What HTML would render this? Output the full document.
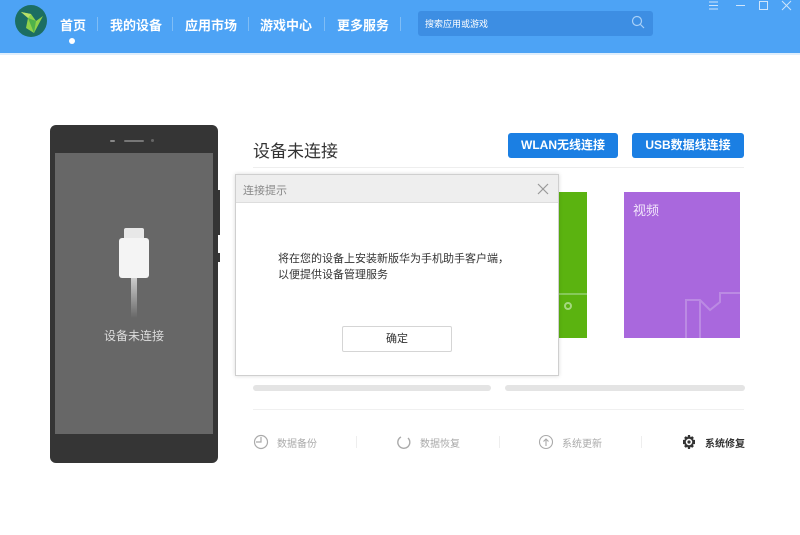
<!DOCTYPE html>
<html><head><meta charset="utf-8"><style>
*{margin:0;padding:0;box-sizing:border-box}
body{width:800px;height:535px;background:#fff;font-family:"Liberation Sans","Noto Sans CJK SC",sans-serif;position:relative;overflow:hidden}
.a{position:absolute}
.hdr{left:0;top:0;width:800px;height:55px;background:#4da3f5;border-bottom:2px solid #dfeefc}
.nav{color:#fff;font-size:13px;font-weight:bold;top:15px}
.sep{width:1px;height:14px;background:#7fbdf6;top:17px}
.btn{background:#1b7fe3;color:#fff;font-size:12px;font-weight:bold;text-align:center;line-height:25px;border-radius:3px;top:133px;height:25px}
.bot{top:435px;font-size:10px;color:#aaa}
.bar{top:385px;height:6px;background:#e4e4e4;border-radius:3px}
</style></head><body>
<div class="a hdr"></div>
<svg class="a" style="left:14px;top:4px" width="36" height="34" viewBox="0 0 36 34">
<circle cx="17" cy="17" r="16" fill="#1c6e62"/>
<polygon points="7,8 14,14 12,24 20,29 29,12 22,17 17,10" fill="#8fd14a"/>
<polygon points="14,14 20,29 22,17" fill="#4fb24a"/>
<polygon points="7,8 17,10 14,14" fill="#b8e06a"/>
</svg>
<div class="a nav" style="left:60px">首页</div>
<div class="a" style="left:69px;top:38px;width:6px;height:6px;border-radius:3px;background:#fff"></div>
<div class="a sep" style="left:97px"></div>
<div class="a nav" style="left:110px">我的设备</div>
<div class="a sep" style="left:172px"></div>
<div class="a nav" style="left:185px">应用市场</div>
<div class="a sep" style="left:248px"></div>
<div class="a nav" style="left:260px">游戏中心</div>
<div class="a sep" style="left:324px"></div>
<div class="a nav" style="left:337px">更多服务</div>
<div class="a sep" style="left:400px"></div>
<div class="a" style="left:418px;top:11px;width:235px;height:25px;background:#3d8ee3;border-radius:3px"></div>
<div class="a" style="left:425px;top:17px;font-size:9px;color:#fff">搜索应用或游戏</div>
<svg class="a" style="left:631px;top:15px" width="14" height="14"><circle cx="6" cy="6" r="4.5" stroke="#a8d0f8" fill="none" stroke-width="1.2"/><line x1="9.5" y1="9.5" x2="13" y2="13" stroke="#a8d0f8" stroke-width="1.2"/></svg>
<svg class="a" style="left:705px;top:0" width="95" height="12" stroke="#cfe5fb" fill="none" stroke-width="1">
<line x1="4" y1="2" x2="13" y2="2"/><line x1="4" y1="5.5" x2="13" y2="5.5"/><line x1="4" y1="9" x2="13" y2="9"/>
<line x1="31" y1="5.5" x2="40" y2="5.5"/>
<rect x="54.5" y="1.5" width="8" height="8"/>
<line x1="77" y1="1" x2="86" y2="10"/><line x1="86" y1="1" x2="77" y2="10"/></svg>

<div class="a" style="left:50px;top:125px;width:168px;height:338px;background:#353535;border-radius:6px"></div>
<div class="a" style="left:218px;top:190px;width:2px;height:45px;background:#353535"></div>
<div class="a" style="left:218px;top:253px;width:2px;height:9px;background:#353535"></div>
<div class="a" style="left:110px;top:140px;width:5px;height:2px;background:#888;border-radius:1px"></div>
<div class="a" style="left:124px;top:140px;width:20px;height:2px;background:#777;border-radius:1px"></div>
<div class="a" style="left:151px;top:139px;width:3px;height:3px;background:#666;border-radius:2px"></div>
<div class="a" style="left:55px;top:153px;width:158px;height:281px;background:#676767"></div>
<div class="a" style="left:124px;top:228px;width:20px;height:10px;background:#e8e8e8;border-radius:2px 2px 0 0"></div>
<div class="a" style="left:119px;top:238px;width:30px;height:40px;background:#f4f4f4;border-radius:3px"></div>
<div class="a" style="left:131px;top:278px;width:6px;height:40px;background:linear-gradient(#ccc,#676767)"></div>
<div class="a" style="left:104px;top:327px;font-size:12px;color:#ddd">设备未连接</div>

<div class="a" style="left:253px;top:137px;font-size:17px;color:#333">设备未连接</div>
<div class="a btn" style="left:508px;width:110px">WLAN无线连接</div>
<div class="a btn" style="left:632px;width:112px">USB数据线连接</div>
<div class="a" style="left:253px;top:167px;width:491px;height:1px;background:#eee"></div>

<div class="a" style="left:555px;top:192px;width:32px;height:146px;background:#5bb310"></div>
<div class="a" style="left:559px;top:293px;width:28px;height:2px;background:#86c95a"></div>
<div class="a" style="left:564px;top:302px;width:8px;height:8px;border:2px solid #a5d880;border-radius:50%"></div>
<div class="a" style="left:624px;top:192px;width:116px;height:146px;background:#a968dd"></div>
<div class="a" style="left:633px;top:200px;font-size:13px;color:#f2e6fb">视频</div>
<svg class="a" style="left:680px;top:290px" width="60" height="48" fill="none" stroke="#bb8ae3" stroke-width="2"><path d="M60 3H40V12L30 20L20 10L6 10V48M20 10V48"/></svg>

<div class="a" style="left:235px;top:174px;width:324px;height:202px;background:#fff;border:1px solid #cfcfcf;box-shadow:0 0 4px rgba(0,0,0,.15)"></div>
<div class="a" style="left:236px;top:175px;width:322px;height:28px;background:#eeeeee;border-bottom:1px solid #ddd"></div>
<div class="a" style="left:243px;top:182px;font-size:11px;color:#888">连接提示</div>
<svg class="a" style="left:537px;top:183px" width="12" height="12" stroke="#999" stroke-width="1.2"><line x1="1" y1="1" x2="11" y2="11"/><line x1="11" y1="1" x2="1" y2="11"/></svg>
<div class="a" style="left:278px;top:251px;font-size:11px;color:#333;line-height:16px">将在您的设备上安装新版华为手机助手客户端，<br>以便提供设备管理服务</div>
<div class="a" style="left:342px;top:326px;width:110px;height:26px;border:1px solid #d5d5d5;border-radius:2px;text-align:center;line-height:24px;font-size:11px;color:#333">确定</div>

<div class="a bar" style="left:253px;width:238px"></div>
<div class="a bar" style="left:505px;width:240px"></div>
<div class="a" style="left:253px;top:409px;width:491px;height:1px;background:#f0f0f0"></div>

<svg class="a" style="left:253px;top:434px" width="16" height="16" fill="none" stroke="#aaa" stroke-width="1.2"><circle cx="8" cy="8" r="6.5"/><path d="M8 3V8H3"/></svg>
<div class="a bot" style="left:277px">数据备份</div>
<div class="a" style="left:356px;top:436px;width:1px;height:12px;background:#eee"></div>
<svg class="a" style="left:396px;top:434px" width="16" height="16" fill="none" stroke="#aaa" stroke-width="1.4"><path d="M5 3A6 6 0 1 0 12 4"/></svg>
<div class="a bot" style="left:420px">数据恢复</div>
<div class="a" style="left:499px;top:436px;width:1px;height:12px;background:#eee"></div>
<svg class="a" style="left:538px;top:434px" width="16" height="16" fill="none" stroke="#aaa" stroke-width="1.1"><circle cx="8" cy="8" r="6.5"/><path d="M8 12V5M5.5 7.5L8 5L10.5 7.5"/></svg>
<div class="a bot" style="left:562px">系统更新</div>
<div class="a" style="left:641px;top:436px;width:1px;height:12px;background:#eee"></div>
<svg class="a" style="left:681px;top:434px" width="16" height="16"><path d="M7 1H9L9.5 3.2L11.3 2.2L12.8 3.7L11.8 5.5L14 6V8V10L11.8 10.5L12.8 12.3L11.3 13.8L9.5 12.8L9 15H7L6.5 12.8L4.7 13.8L3.2 12.3L4.2 10.5L2 10V6L4.2 5.5L3.2 3.7L4.7 2.2L6.5 3.2Z" fill="#333"/><circle cx="8" cy="8" r="3.2" fill="#fff"/><circle cx="8" cy="8" r="1.6" fill="#333"/></svg>
<div class="a bot" style="left:705px;color:#333;font-weight:bold">系统修复</div>
</body></html>
